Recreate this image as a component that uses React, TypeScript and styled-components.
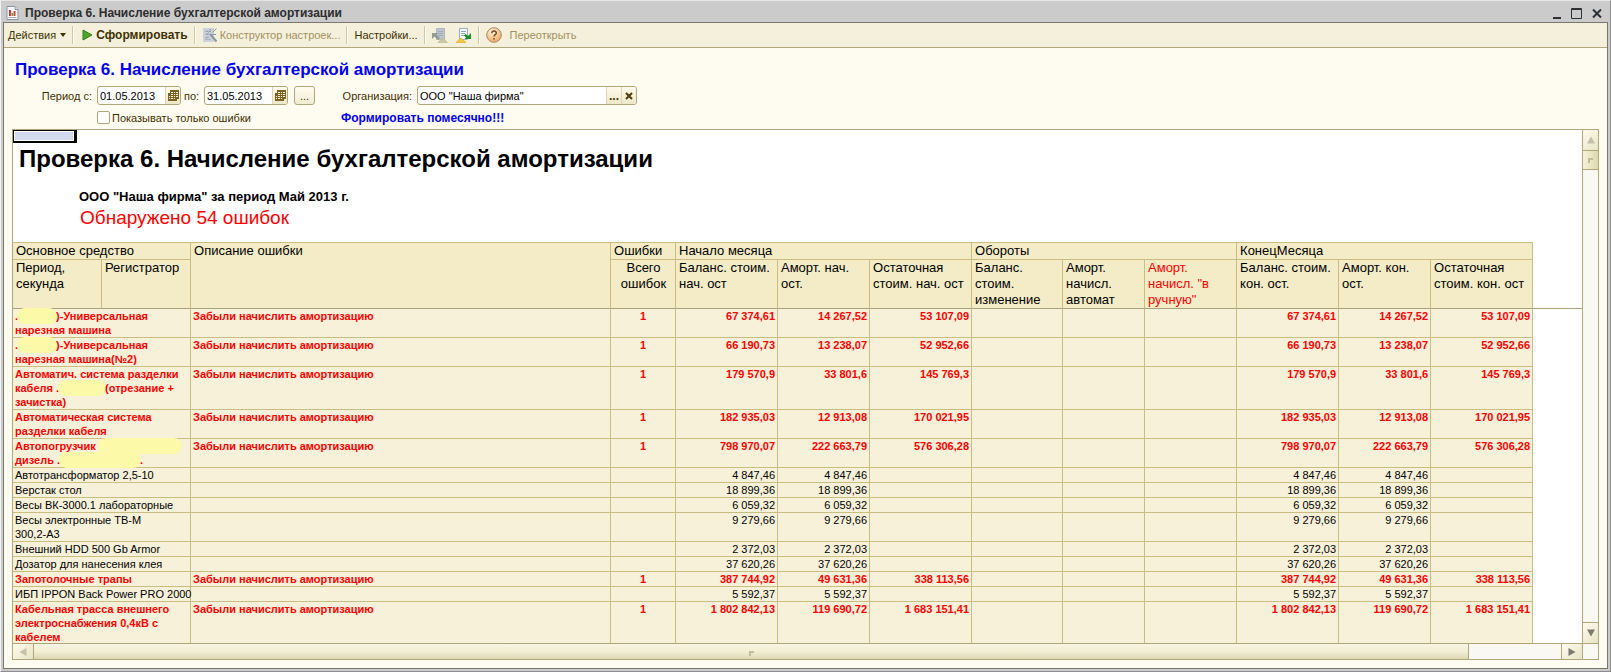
import React from "react";
import styled, { createGlobalStyle } from "styled-components";

const line = "#c9bd82";
const frame = "#b0a67a";

const GlobalStyle = createGlobalStyle`
  * { box-sizing: border-box; }
  body { margin: 0; font-family: "Liberation Sans", Arial, sans-serif; font-size: 11px; color: #3f3000; }
  button, input { font: inherit; color: inherit; }
  h1, h2, p { margin: 0; }
`;

const Window = styled.main`
  display: flex;
  flex-direction: column;
  height: 100vh;
  padding: 0 2px 2px;
  background: #cbcbcb;
  border: 1px solid #8c8c8c;
  border-top-color: #e6e6e6;
  border-left-color: #f2f2f2;
`;

const TitleBar = styled.header`
  flex: none;
  display: flex;
  align-items: center;
  height: 21px;
  padding: 2px 2px 0 3px;
  gap: 6px;
`;

const WindowTitle = styled.h1`
  flex: 1;
  font-size: 12px;
  line-height: 16px;
  color: #2d2d2d;
`;

const WindowButtons = styled.div`
  display: flex;
  gap: 2px;
`;

const WindowButton = styled.button`
  display: flex;
  width: 18px;
  height: 18px;
  padding: 2px;
  border: 0;
  background: none;
`;

const Client = styled.section`
  flex: 1;
  min-height: 0;
  display: flex;
  flex-direction: column;
  border: 1px solid #77776f;
  background: #fefbf0;
`;

const Toolbar = styled.nav`
  flex: none;
  display: flex;
  align-items: center;
  height: 25px;
  padding: 0 4px;
  background: #f4f0dc;
  border-bottom: 1px solid ${frame};
`;

const ToolButton = styled.button<{ $strong?: boolean; $dim?: boolean; $gap?: number }>`
  display: flex;
  align-items: center;
  gap: ${(p) => p.$gap || 4}px;
  height: 22px;
  padding: 0;
  border: 0;
  background: none;
  white-space: nowrap;
  font-size: ${(p) => (p.$strong ? 12 : 11)}px;
  font-weight: ${(p) => (p.$strong ? 700 : 400)};
  color: ${(p) => (p.$dim ? "#a3905c" : "#3f3000")};
`;

const ToolGroup = styled.div`
  display: flex;
  gap: 8px;
`;

const Separator = styled.span`
  flex: none;
  width: 2px;
  height: 18px;
  margin: 0 6px;
  background: #cfc8a6;
  border-right: 1px solid #fffdf2;
`;

const Form = styled.form`
  flex: none;
  padding: 10px 11px 0;
`;

const FormTitle = styled.h2`
  font-size: 17px;
  line-height: 24px;
  color: #0000f0;
`;

const Fields = styled.div`
  display: grid;
  grid-template-columns: 78px 241px 79px 220px;
  grid-template-rows: 19px 19px;
  row-gap: 3px;
  align-items: center;
  padding: 4px 0 2px 4px;
`;

const FieldLabel = styled.label`
  white-space: nowrap;
  justify-self: end;
  padding-right: 5px;
`;

const Inline = styled.div`
  display: flex;
  align-items: center;
`;

const Field = styled.div<{ $w: string }>`
  display: flex;
  width: ${(p) => p.$w};
  height: 19px;
  overflow: hidden;
  background: #fff;
  border: 1px solid ${frame};
  border-radius: 3px;
`;

const TextBox = styled.input`
  flex: 1;
  min-width: 0;
  padding: 0 2px;
  border: 0;
  outline: 0;
  background: none;
  color: #000;
`;

const FieldButton = styled.button`
  flex: none;
  display: flex;
  align-items: center;
  justify-content: center;
  width: 15px;
  padding: 0;
  border: 0;
  border-left: 1px solid #ddd5b4;
  background: linear-gradient(#fdfaeb, #eee8c8);
  font-size: 12px;
  font-weight: 700;
`;

const MoreButton = styled.button`
  width: 21px;
  height: 19px;
  margin-left: 6px;
  padding: 0;
  border: 1px solid ${frame};
  border-radius: 3px;
  background: linear-gradient(#fffdf2, #f0ebd0);
  line-height: 16px;
`;

const To = styled.label`
  width: 23px;
  padding-left: 3px;
`;

const CheckLabel = styled.label`
  grid-column: 2;
  display: flex;
  align-items: center;
  gap: 2px;
  white-space: nowrap;
`;

const CheckBox = styled.input`
  appearance: none;
  width: 13px;
  height: 13px;
  margin: 0;
  background: #fff;
  border: 1px solid ${frame};
  border-radius: 2px;
`;

const Notice = styled.strong`
  grid-column: 3 / 5;
  padding-left: 3px;
  font-size: 12px;
  color: #0000f0;
`;

const Sheet = styled.section`
  flex: 1;
  min-height: 0;
  display: grid;
  grid-template-columns: minmax(0, 1fr) 16px;
  grid-template-rows: minmax(0, 1fr) 16px;
  margin: 0 8px 8px;
  border: 1px solid ${frame};
  background: #fff;
`;

const Page = styled.div`
  overflow: hidden;
`;

const ActiveCell = styled.div`
  width: 64px;
  height: 13px;
  border: 1px solid #000;
  border-width: 1px 3px 2px 1px;
  background: #d3d9ed;
  box-shadow: inset 0 0 0 1px #fff;
`;

const ReportTitle = styled.h2`
  padding: 2px 0 0 6px;
  font-size: 24px;
  line-height: 28px;
  color: #000;
`;

const ReportPeriod = styled.p`
  padding: 16px 0 0 66px;
  font-size: 13px;
  line-height: 16px;
  font-weight: 700;
  color: #000;
`;

const ErrorCount = styled.p`
  padding: 1px 0 13px 67px;
  font-size: 19px;
  line-height: 23px;
  color: #f00;
`;

const TableBand = styled.div`
  background: linear-gradient(#a9a281, #a9a281) 0 66px / 100% 1px no-repeat;
`;

const Table = styled.table`
  width: 1520px;
  table-layout: fixed;
  border-collapse: separate;
  border-spacing: 0;
  border-top: 1px solid ${line};
  color: #000;
`;

const HeadCell = styled.th<{ $red?: boolean; $center?: boolean; $last?: boolean }>`
  padding: 0 2px 0 3px;
  border-right: 1px solid ${line};
  border-bottom: 1px solid ${(p) => (p.$last ? "#a9a281" : line)};
  background: #f4ecc7;
  font-size: 13px;
  line-height: 16px;
  font-weight: 400;
  vertical-align: top;
  white-space: nowrap;
  text-align: ${(p) => (p.$center ? "center" : "left")};
  color: ${(p) => (p.$red ? "#f00" : "#000")};
`;

const HeadRow = styled.tr<{ $h: number }>`
  height: ${(p) => p.$h}px;
`;

const Row = styled.tr<{ $error?: boolean }>`
  color: ${(p) => (p.$error ? "#f00" : "#000")};
  font-weight: ${(p) => (p.$error ? 700 : 400)};
`;

const Cell = styled.td<{ $align?: string }>`
  height: 15px;
  padding: 0 2px;
  border-right: 1px solid ${line};
  border-bottom: 1px solid ${line};
  background: #f7f1da;
  font-size: 11px;
  line-height: 14px;
  vertical-align: top;
  white-space: nowrap;
  text-align: ${(p) => p.$align || "left"};
`;

const Marker = styled.span<{ $w: number }>`
  display: inline-block;
  width: ${(p) => p.$w}px;
  height: 16px;
  margin: -1px;
  vertical-align: top;
  border-radius: 8px;
  background: #fcf9a8;
`;

const VScroll = styled.div`
  display: flex;
  flex-direction: column;
  justify-content: space-between;
  border-left: 1px solid ${frame};
  background: #f9f8f2;
`;

const HScroll = styled.div`
  display: flex;
  border-top: 1px solid ${frame};
  background: #f9f8f2;
`;

const Corner = styled.div`
  border-top: 1px solid ${frame};
  border-left: 1px solid ${frame};
  background: #f9f8f2;
`;

const ScrollButton = styled.button<{ $w?: number; $h?: number; $edge: string }>`
  flex: none;
  display: flex;
  align-items: center;
  justify-content: center;
  width: ${(p) => (p.$w ? p.$w + "px" : "100%")};
  height: ${(p) => (p.$h ? p.$h + "px" : "100%")};
  padding: 0;
  border: 0 solid ${frame};
  border-${(p) => p.$edge}-width: 1px;
  background: linear-gradient(135deg, #fdfbef, #e9e4c5);
`;

const VThumb = styled(ScrollButton)`
  background: linear-gradient(90deg, #f7f3da, #dfd8ae);
`;

const HThumb = styled.button`
  width: 94%;
  padding: 0;
  border: 0;
  border-right: 1px solid ${frame};
  background: linear-gradient(#f8f5e2, #f3eed4 50%, #ddd7b2);
`;

const HTrack = styled.div`
  flex: 1;
  display: flex;
`;

const Arrow = ({ rotate, color }: { rotate: number; color: string }) => (
  <svg width="8" height="8" viewBox="0 0 8 8">
    <path d="M0 7.500 4 .5l4 7z" fill={color} transform={`rotate(${rotate} 4 4)`} />
  </svg>
);

const Grip = () => (
  <svg width="5" height="5" viewBox="0 0 5 5">
    <path d="M1 5V1H5" fill="none" stroke="#c0bc9e" strokeWidth="2" />
  </svg>
);

const ReportIcon = () => (
  <svg width="13" height="14" viewBox="0 0 13 14">
    <path d="M1 .5h8l3 3v10H1z" fill="#fff" stroke="#8795a8" />
    <path d="M9 .5v3h3" fill="#dbe4ee" stroke="#8795a8" />
    <path d="M3 4h2v6H3z" fill="#e02f25" />
    <path d="M5.500 7H7v3H5.500z" fill="#5ba03c" />
    <path d="M7.500 5h2v5h-2z" fill="#d6462e" />
    <path d="M2.500 11.500h8" stroke="#aaa" />
  </svg>
);

const WizardIcon = () => (
  <svg width="16" height="16" viewBox="0 0 16 16">
    <path d="M1 1h11v14H1z" fill="#cdd2da" />
    <path d="M3 4.500h6M3 7.500h3M3 10.500h4M3 12.500h6" stroke="#aab4c2" />
    <path d="M8 7l6.500 7.500" stroke="#8d949d" strokeWidth="2" />
    <path d="M8 2v3M4 7h3M10.500 5.500l4-4M10 7.500h4M6 9.500l-2 2M4.500 3.500l2 2" stroke="#8c97a6" />
  </svg>
);

const SheetIcon = ({ dim }: { dim?: boolean }) => (
  <svg width="16" height="16" viewBox="0 0 16 16">
    <path d={dim ? "M4.500 1.500h8v11h-8z" : "M3.500 1.500h8v11h-8z"} fill={dim ? "#bcc3cc" : "#f5f8fc"} stroke={dim ? "#b0b8c2" : "#9cafc6"} />
    <path d={dim ? "M6 4.500h5M6 6.500h5M6 8.500h5" : "M5 4.500h5M5 6.500h4M5 8.500h4"} stroke={dim ? "#a5adb8" : "#8ea4bc"} />
    {dim ? (
      <path d="M0 6h6L4.500 7.500 8 11l-2 2-3.500-3.500L0 12z" fill="#8f9d95" />
    ) : (
      <path d="M15 12H8.500L10 10.500 8 8.500l1.500-1.500 2.500 2L15 6z" fill="#1d8f24" />
    )}
    <path d={dim ? "M6 15.500l4.500-4.500 5 4.500z" : "M0 15.500l5-4.500 5 4.500z"} fill={dim ? "#cdc5a6" : "#f2c83c"} stroke={dim ? "#bcb28c" : "#dba325"} strokeWidth=".6" />
  </svg>
);

const HelpIcon = () => (
  <svg width="16" height="16" viewBox="0 0 16 16">
    <defs>
      <radialGradient id="help" cx=".4" cy=".3" r=".8">
        <stop offset="0" stopColor="#fff3dc" />
        <stop offset="1" stopColor="#f0a050" />
      </radialGradient>
    </defs>
    <circle cx="8" cy="8" r="7.300" fill="url(#help)" stroke="#a98a68" />
    <path d="M5.800 6.300C5.800 3.300 10.500 3.400 10.300 6.200 10.200 7.700 8 7.700 8 9.600M8 11v1.600" fill="none" stroke="#6b4a2a" strokeWidth="1.500" />
  </svg>
);

const CalendarIcon = () => (
  <svg width="11" height="11" viewBox="0 0 11 11">
    <path d="M2 0h9v9H9v2H0V3h2z" fill="#7a6222" />
    <path d="M3 2h2v1H3zM6 2h1v1H6zM8 2h2v1H8zM3 4h2v1H3zM6 4h1v1H6zM8 4h2v1H8zM1 6h1v1H1zM3 6h2v1H3zM6 6h1v1H6zM8 6h2v1H8zM1 8h1v1H1zM3 8h2v1H3zM6 8h1v1H6z" fill="#f8f2d8" />
  </svg>
);

type Item = { name: React.ReactNode; error?: boolean; start: string; amort: string; rest?: string };

const items: Item[] = [
  { name: <>.<Marker $w={40} />)-Универсальная<br />нарезная машина</>, error: true, start: "67 374,61", amort: "14 267,52", rest: "53 107,09" },
  { name: <>.<Marker $w={40} />)-Универсальная<br />нарезная машина(№2)</>, error: true, start: "66 190,73", amort: "13 238,07", rest: "52 952,66" },
  { name: <>Автоматич. система разделки<br />кабеля .<Marker $w={48} />(отрезание +<br />зачистка)</>, error: true, start: "179 570,9", amort: "33 801,6", rest: "145 769,3" },
  { name: <>Автоматическая система<br />разделки кабеля</>, error: true, start: "182 935,03", amort: "12 913,08", rest: "170 021,95" },
  { name: <>Автопогрузчик <Marker $w={84} /><br />дизель .<Marker $w={82} />.</>, error: true, start: "798 970,07", amort: "222 663,79", rest: "576 306,28" },
  { name: "Автотрансформатор 2,5-10", start: "4 847,46", amort: "4 847,46" },
  { name: "Верстак стол", start: "18 899,36", amort: "18 899,36" },
  { name: "Весы ВК-3000.1 лабораторные", start: "6 059,32", amort: "6 059,32" },
  { name: <>Весы электронные ТВ-М<br />300,2-А3</>, start: "9 279,66", amort: "9 279,66" },
  { name: "Внешний HDD 500 Gb Armor", start: "2 372,03", amort: "2 372,03" },
  { name: "Дозатор для нанесения клея", start: "37 620,26", amort: "37 620,26" },
  { name: "Запотолочные трапы", error: true, start: "387 744,92", amort: "49 631,36", rest: "338 113,56" },
  { name: "ИБП IPPON Back Power PRO 2000", start: "5 592,37", amort: "5 592,37" },
  { name: <>Кабельная трасса внешнего<br />электроснабжения 0,4кВ с<br />кабелем</>, error: true, start: "1 802 842,13", amort: "119 690,72", rest: "1 683 151,41" },
];

const columns = [89, 89, 420, 65, 102, 92, 102, 91, 82, 92, 102, 92, 102];

export default function App() {
  return (
    <>
      <GlobalStyle />
      <Window>
        <TitleBar>
          <ReportIcon />
          <WindowTitle>Проверка 6. Начисление бухгалтерской амортизации</WindowTitle>
          <WindowButtons>
            <WindowButton aria-label="Свернуть">
              <svg width="14" height="14"><path d="M3 11h8v2H3z" fill="#2d3035" /></svg>
            </WindowButton>
            <WindowButton aria-label="Развернуть">
              <svg width="14" height="14"><path d="M1.500 2.500h10v10h-10zM1 3.500h11" fill="none" stroke="#2d3035" /></svg>
            </WindowButton>
            <WindowButton aria-label="Закрыть">
              <svg width="14" height="14"><path d="M3 3.500l8 8M11 3.500l-8 8" stroke="#2d3035" strokeWidth="2" /></svg>
            </WindowButton>
          </WindowButtons>
        </TitleBar>
        <Client>
          <Toolbar>
            <ToolButton>
              Действия
              <svg width="6" height="4"><path d="M0 0h6L3 4z" fill="#3f3000" /></svg>
            </ToolButton>
            <Separator />
            <ToolButton $strong $gap={2}>
              <svg width="14" height="12"><path d="M3 1l9 5-9 5z" fill="#4fa52b" stroke="#34801a" /></svg>
              Сформировать
            </ToolButton>
            <Separator />
            <ToolButton $dim $gap={2}>
              <WizardIcon />
              Конструктор настроек...
            </ToolButton>
            <Separator />
            <ToolButton>Настройки...</ToolButton>
            <Separator />
            <ToolGroup>
              <ToolButton aria-label="Сохранить значения"><SheetIcon dim /></ToolButton>
              <ToolButton aria-label="Восстановить значения"><SheetIcon /></ToolButton>
            </ToolGroup>
            <Separator />
            <ToolGroup>
              <ToolButton aria-label="Справка"><HelpIcon /></ToolButton>
              <ToolButton $dim>Переоткрыть</ToolButton>
            </ToolGroup>
          </Toolbar>
          <Form onSubmit={(e) => e.preventDefault()}>
            <FormTitle>Проверка 6. Начисление бухгалтерской амортизации</FormTitle>
            <Fields>
              <FieldLabel htmlFor="from">Период с:</FieldLabel>
              <Inline>
                <Field $w="84px">
                  <TextBox id="from" defaultValue="01.05.2013" />
                  <FieldButton type="button" aria-label="Выбрать дату"><CalendarIcon /></FieldButton>
                </Field>
                <To htmlFor="to">по:</To>
                <Field $w="84px">
                  <TextBox id="to" defaultValue="31.05.2013" />
                  <FieldButton type="button" aria-label="Выбрать дату"><CalendarIcon /></FieldButton>
                </Field>
                <MoreButton type="button">...</MoreButton>
              </Inline>
              <FieldLabel htmlFor="org">Организация:</FieldLabel>
              <Field $w="100%">
                <TextBox id="org" defaultValue={'ООО "Наша фирма"'} />
                <FieldButton type="button">...</FieldButton>
                <FieldButton type="button" aria-label="Очистить">
                  <svg width="8" height="8"><path d="M1 1l6 6M7 1L1 7" stroke="#4d3b05" strokeWidth="2" /></svg>
                </FieldButton>
              </Field>
              <CheckLabel>
                <CheckBox type="checkbox" />
                Показывать только ошибки
              </CheckLabel>
              <Notice>Формировать помесячно!!!</Notice>
            </Fields>
          </Form>
          <Sheet>
            <Page>
              <ActiveCell />
              <ReportTitle>Проверка 6. Начисление бухгалтерской амортизации</ReportTitle>
              <ReportPeriod>ООО "Наша фирма" за период Май 2013 г.</ReportPeriod>
              <ErrorCount>Обнаружено 54 ошибок</ErrorCount>
              <TableBand>
                <Table>
                  <colgroup>{columns.map((w, i) => <col key={i} width={w} />)}</colgroup>
                  <thead>
                    <HeadRow $h={17}>
                      <HeadCell colSpan={2}>Основное средство</HeadCell>
                      <HeadCell rowSpan={2} $last>Описание ошибки</HeadCell>
                      <HeadCell>Ошибки</HeadCell>
                      <HeadCell colSpan={3}>Начало месяца</HeadCell>
                      <HeadCell colSpan={3}>Обороты</HeadCell>
                      <HeadCell colSpan={3}>КонецМесяца</HeadCell>
                    </HeadRow>
                    <HeadRow $h={49}>
                      <HeadCell $last>Период,<br />секунда</HeadCell>
                      <HeadCell $last>Регистратор</HeadCell>
                      <HeadCell $last $center>Всего<br />ошибок</HeadCell>
                      <HeadCell $last>Баланс. стоим.<br />нач. ост</HeadCell>
                      <HeadCell $last>Аморт. нач.<br />ост.</HeadCell>
                      <HeadCell $last>Остаточная<br />стоим. нач. ост</HeadCell>
                      <HeadCell $last>Баланс.<br />стоим.<br />изменение</HeadCell>
                      <HeadCell $last>Аморт.<br />начисл.<br />автомат</HeadCell>
                      <HeadCell $last $red>Аморт.<br />начисл. "в<br />ручную"</HeadCell>
                      <HeadCell $last>Баланс. стоим.<br />кон. ост.</HeadCell>
                      <HeadCell $last>Аморт. кон.<br />ост.</HeadCell>
                      <HeadCell $last>Остаточная<br />стоим. кон. ост</HeadCell>
                    </HeadRow>
                  </thead>
                  <tbody>
                    {items.map((item, i) => (
                      <Row key={i} $error={item.error}>
                        <Cell colSpan={2}>{item.name}</Cell>
                        <Cell>{item.error && "Забыли начислить амортизацию"}</Cell>
                        <Cell $align="center">{item.error && "1"}</Cell>
                        <Cell $align="right">{item.start}</Cell>
                        <Cell $align="right">{item.amort}</Cell>
                        <Cell $align="right">{item.rest}</Cell>
                        <Cell />
                        <Cell />
                        <Cell />
                        <Cell $align="right">{item.start}</Cell>
                        <Cell $align="right">{item.amort}</Cell>
                        <Cell $align="right">{item.rest}</Cell>
                      </Row>
                    ))}
                  </tbody>
                </Table>
              </TableBand>
            </Page>
            <VScroll>
              <div>
                <ScrollButton $h={21} $edge="bottom" aria-label="Вверх"><Arrow rotate={0} color="#c3c0ab" /></ScrollButton>
                <VThumb $h={19} $edge="bottom" aria-label="Ползунок"><Grip /></VThumb>
              </div>
              <ScrollButton $h={21} $edge="top" aria-label="Вниз"><Arrow rotate={180} color="#7d7b70" /></ScrollButton>
            </VScroll>
            <HScroll>
              <ScrollButton $w={21} $edge="right" aria-label="Влево"><Arrow rotate={-90} color="#c3c0ab" /></ScrollButton>
              <HTrack><HThumb aria-label="Ползунок"><Grip /></HThumb></HTrack>
              <ScrollButton $w={21} $edge="left" aria-label="Вправо"><Arrow rotate={90} color="#7d7b70" /></ScrollButton>
            </HScroll>
            <Corner />
          </Sheet>
        </Client>
      </Window>
    </>
  );
}
